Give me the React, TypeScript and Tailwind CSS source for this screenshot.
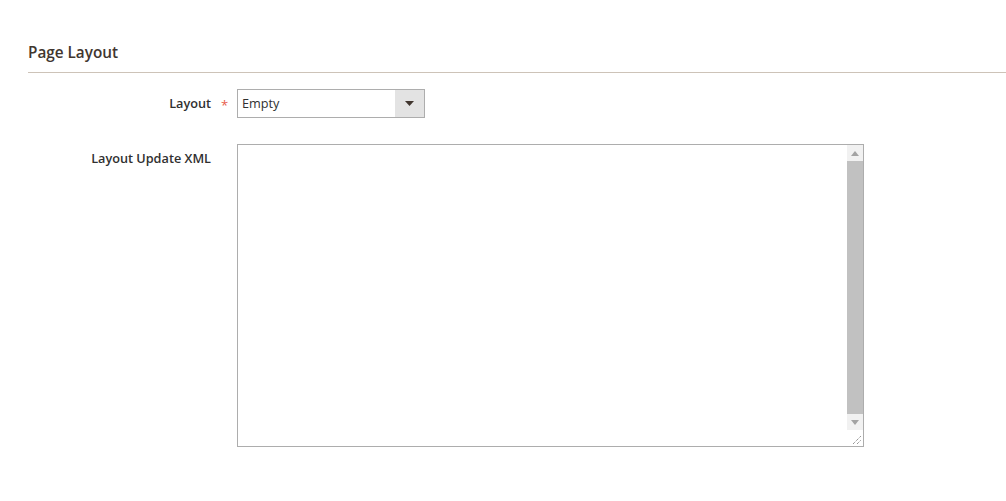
import React from 'react';

const font = { fontFamily: '"Open Sans", "Liberation Sans", sans-serif' };

// fake scrollbar that sits inside the textarea box
const Scrollbar: React.FC = () => (
  <div className="absolute right-0 top-0 bottom-0 w-[16px] flex flex-col">
    <div className="flex-1 flex flex-col bg-[#f1f1f1]">
      <div className="h-[16px] flex items-center justify-center">
        <svg width="8" height="5" viewBox="0 0 8 5">
          <path d="M4 0 L8 5 L0 5 Z" fill="#a3a3a3" />
        </svg>
      </div>
      <div className="flex-1 bg-[#c1c1c1]" />
      <div className="h-[16px] flex items-center justify-center">
        <svg width="8" height="5" viewBox="0 0 8 5">
          <path d="M0 0 L8 0 L4 5 Z" fill="#a3a3a3" />
        </svg>
      </div>
    </div>
    <div className="h-[16px] bg-white relative">
      <svg className="absolute right-[1px] bottom-[1px]" width="11" height="11" viewBox="0 0 11 11">
        <path d="M2 10 L10 2 M6 10 L10 6" stroke="#6b6b6b" strokeWidth="1" strokeDasharray="1 1" />
      </svg>
    </div>
  </div>
);

const FieldLabel: React.FC<{ text: string; required?: boolean }> = ({ text, required }) => (
  <div className="w-[209px] flex shrink-0">
    <div className="flex-1 text-right text-[12.7px] leading-[20px] font-semibold text-[#303030] pr-[10px]">
      {text}
    </div>
    <div className="w-[16px] text-[#e8604c] text-[13px] leading-[20px] pt-[2px]">
      {required ? '*' : ''}
    </div>
  </div>
);

export default function App() {
  return (
    <div className="w-[1006px] h-[501px] bg-white pl-[28px] pt-[42px]" style={font}>
      <div className="border-b border-[#cdc3b8] pb-[10px]">
        <h2 className="text-[15.3px] leading-[20px] font-semibold text-[#41362f]">Page Layout</h2>
      </div>

      <div className="flex items-center mt-[16px]">
        <FieldLabel text="Layout" required />
        <div className="w-[188px] h-[29px] border border-[#adadad] flex bg-white">
          <div className="flex-1 pl-[4px] text-[12.7px] leading-[27px] text-[#303030]">Empty</div>
          <div className="w-[29px] bg-[#e3e3e3] flex items-center justify-center">
            <svg width="9" height="5" viewBox="0 0 9 5">
              <path d="M0 0 L9 0 L4.5 5 Z" fill="#41362f" />
            </svg>
          </div>
        </div>
      </div>

      <div className="flex items-start mt-[26px]">
        <div className="pt-[4px]">
          <FieldLabel text="Layout Update XML" />
        </div>
        <div className="relative w-[627px] h-[303px] border border-[#adadad] bg-white">
          <Scrollbar />
        </div>
      </div>
    </div>
  );
}
